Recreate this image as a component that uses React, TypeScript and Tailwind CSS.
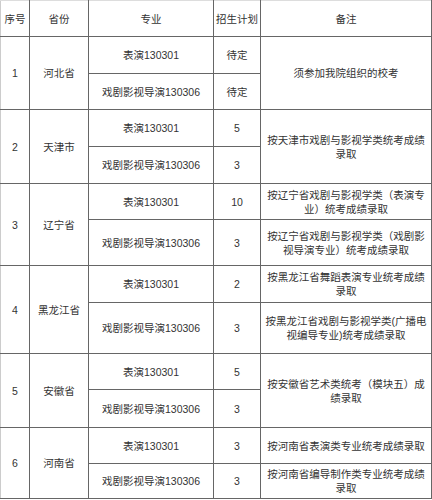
const rows = [
  {
    no: "1",
    prov: "河北省",
    items: [
      { major: "表演130301", plan: "待定", h: "h-[37px]" },
      { major: "戏剧影视导演130306", plan: "待定", h: "h-[36px]" },
    ],
    merged: ["须参加我院组织的校考"],
  },
  {
    no: "2",
    prov: "天津市",
    items: [
      { major: "表演130301", plan: "5", h: "h-[37px]" },
      { major: "戏剧影视导演130306", plan: "3", h: "h-[37px]" },
    ],
    merged: ["按天津市戏剧与影视学类统考成绩", "录取"],
  },
  {
    no: "3",
    prov: "辽宁省",
    items: [
      { major: "表演130301", plan: "10", h: "h-[36px]", note: ["按辽宁省戏剧与影视学类（表演专", "业）统考成绩录取"] },
      { major: "戏剧影视导演130306", plan: "3", h: "h-[46px]", note: ["按辽宁省戏剧与影视学类（戏剧影", "视导演专业）统考成绩录取"] },
    ],
  },
  {
    no: "4",
    prov: "黑龙江省",
    items: [
      { major: "表演130301", plan: "2", h: "h-[37px]", note: ["按黑龙江省舞蹈表演专业统考成绩", "录取"] },
      { major: "戏剧影视导演130306", plan: "3", h: "h-[51px]", note: ["按黑龙江省戏剧与影视学类(广播电", "视编导专业)统考成绩录取"] },
    ],
  },
  {
    no: "5",
    prov: "安徽省",
    items: [
      { major: "表演130301", plan: "5", h: "h-[36px]" },
      { major: "戏剧影视导演130306", plan: "3", h: "h-[38px]" },
    ],
    merged: ["按安徽省艺术类统考（模块五）成", "绩录取"],
  },
  {
    no: "6",
    prov: "河南省",
    items: [
      { major: "表演130301", plan: "3", h: "h-[36px]", note: ["按河南省表演类专业统考成绩录取"] },
      { major: "戏剧影视导演130306", plan: "3", h: "h-[35px]", note: ["按河南省编导制作类专业统考成绩", "录取"] },
    ],
  },
];

function Lines({ lines }: { lines: string[] }) {
  return (
    <>
      {lines.map((l, i) => (
        <div key={i}>{l}</div>
      ))}
    </>
  );
}

export default function App() {
  const cell = "border border-[#666] text-center align-middle p-0";
  return (
    <div
      className="bg-white w-[432px] h-[500px] text-[10.5px] leading-[14px] text-[#333]"
      style={{ fontFamily: '"Liberation Sans", "Noto Sans CJK SC", sans-serif' }}
    >
      <table className="table-fixed border-collapse w-[431px]">
        <colgroup>
          <col className="w-[29px]" />
          <col className="w-[59px]" />
          <col className="w-[125px]" />
          <col className="w-[47px]" />
          <col className="w-[171px]" />
        </colgroup>
        <thead>
          <tr className="h-[36px]">
            <th className={`${cell} font-normal border-t-[#ddd] border-l-[#ccc]`}>序号</th>
            <th className={`${cell} font-normal border-t-[#ddd]`}>省份</th>
            <th className={`${cell} font-normal border-t-[#ddd]`}>专业</th>
            <th className={`${cell} font-normal border-t-[#ddd]`}>招生计划</th>
            <th className={`${cell} font-normal border-t-[#ddd]`}>备注</th>
          </tr>
        </thead>
        <tbody>
          {rows.map((r) =>
            r.items.map((it, i) => (
              <tr key={r.no + i} className={it.h}>
                {i === 0 && (
                  <>
                    <td rowSpan={2} className={`${cell} border-l-[#ccc]`}>
                      {r.no}
                    </td>
                    <td rowSpan={2} className={cell}>
                      {r.prov}
                    </td>
                  </>
                )}
                <td className={cell}>{it.major}</td>
                <td className={cell}>{it.plan}</td>
                {r.merged
                  ? i === 0 && (
                      <td rowSpan={2} className={`${cell} px-1`}>
                        <Lines lines={r.merged} />
                      </td>
                    )
                  : (
                      <td className={`${cell} px-1`}>
                        <Lines lines={(it as { note: string[] }).note} />
                      </td>
                    )}
              </tr>
            ))
          )}
        </tbody>
      </table>
    </div>
  );
}
